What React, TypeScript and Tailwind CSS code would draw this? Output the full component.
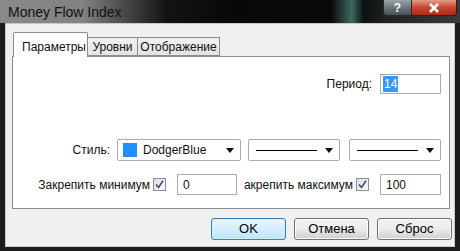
import React from "react";

const font = { fontFamily: '"Liberation Sans", Arial, sans-serif' };

function Checkbox() {
  return (
    <div className="w-[13px] h-[13px] border border-[#8e8f8f] bg-gradient-to-br from-[#dcdcdc] to-[#fbfbfb] flex items-center justify-center">
      <svg width="9" height="9" viewBox="0 0 9 9">
        <path d="M1 4.5 L3.5 7.5 L8 0.8" stroke="#3d4f8a" strokeWidth="1.6" fill="none" />
      </svg>
    </div>
  );
}

function Arrow() {
  return (
    <svg width="8" height="5" viewBox="0 0 8 5" className="shrink-0">
      <path d="M0 0 H8 L4 5 Z" fill="#111" />
    </svg>
  );
}

function Btn({ label, def }: { label: string; def?: boolean }) {
  return (
    <div
      className={
        "w-[75px] h-[22px] rounded-[3px] flex items-center justify-center text-[13px] text-black " +
        (def
          ? "border border-[#3c7fb1] bg-gradient-to-b from-[#eaf6fd] to-[#bee6fd] shadow-[inset_0_0_0_1px_#cdeefb]"
          : "border border-[#707070] bg-gradient-to-b from-[#f2f2f2] via-[#ebebeb] to-[#cfcfcf] shadow-[inset_0_0_0_1px_#fcfcfc]")
      }
    >
      {label}
    </div>
  );
}

export default function App() {
  return (
    <div
      className="w-[460px] h-[251px] bg-[#1c1c1c] flex flex-col overflow-hidden"
      style={font}
    >
      {/* title bar */}
      <div className="h-[23px] shrink-0 flex items-start bg-[linear-gradient(90deg,#8a8a8a_0%,#828282_18%,#4a4a4a_27%,#141414_36%,#080808_50%,#0a0a0a_72%,#3d6a62_76.5%,#0c1210_79%,#202020_84%,#3a3a3a_100%)]">
        <div className="pl-[8px] pt-[4px] text-[14px] leading-[16px] text-[#111]">
          Money Flow Index
        </div>
        <div className="ml-auto mr-[3px] flex h-[16px]">
          <div className="w-[29px] h-full border border-[#2a2a2a] border-t-0 rounded-bl-[4px] bg-gradient-to-b from-[#9aa3aa] via-[#6e767c] to-[#4a5156] flex items-center justify-center text-white text-[12px] font-bold leading-none">
            ?
          </div>
          <div className="w-[45px] h-full border border-[#3a1a16] border-t-0 border-l-0 rounded-br-[4px] bg-gradient-to-b from-[#e29a88] via-[#c9452e] to-[#b02a18] flex items-center justify-center">
            <svg width="12" height="10" viewBox="0 0 12 10">
              <path d="M2 1 L10 9 M10 1 L2 9" stroke="#fff" strokeWidth="2.6" />
            </svg>
          </div>
        </div>
      </div>

      {/* client area */}
      <div className="mx-[5px] h-[224px] shrink-0 bg-[#f0f0f0] border border-[#c8c8c8] flex flex-col text-[12px] text-[#111]">
        {/* tabs */}
        <div className="ml-[7px] mt-[8px] flex items-end h-[24px] shrink-0">
          <div className="w-[75px] h-[25px] border border-[#898c95] border-b-0 bg-white rounded-t-[2px] pt-[5px] pl-[8px] -mb-px relative z-10">
            Параметры
          </div>
          <div className="w-[50px] h-[19px] border border-[#898c95] border-l-0 bg-gradient-to-b from-[#f2f2f2] to-[#e3e3e3] flex items-center justify-center">
            Уровни
          </div>
          <div className="w-[82px] h-[19px] border border-[#898c95] border-l-0 bg-gradient-to-b from-[#f2f2f2] to-[#e3e3e3] flex items-center justify-center">
            Отображение
          </div>
        </div>

        {/* panel */}
        <div className="ml-[6px] mr-[4px] h-[153px] shrink-0 border border-[#898c95] bg-white flex flex-col pr-[8px]">
          {/* period row */}
          <div className="mt-[17px] flex items-center justify-end gap-[8px]">
            <span>Период:</span>
            <div className="w-[61px] h-[20px] border border-[#abadb3] border-t-[#a0a2a8] flex items-center pl-[2px]">
              <span className="bg-[#3399ff] text-white px-[1px] leading-[16px]">14</span>
            </div>
          </div>

          {/* style row */}
          <div className="mt-[45px] flex items-center justify-end">
            <span className="mr-[7px]">Стиль:</span>
            <div className="w-[124px] h-[22px] border border-[#acacac] rounded-[2px] bg-white flex items-center pl-[5px] pr-[6px]">
              <div className="w-[14px] h-[14px] bg-[#1e90ff]" />
              <span className="ml-[6px] flex-1">DodgerBlue</span>
              <Arrow />
            </div>
            <div className="ml-[7px] w-[92px] h-[22px] border border-[#acacac] rounded-[2px] bg-white flex items-center pl-[7px] pr-[6px]">
              <div className="w-[61px] h-px bg-black" />
              <div className="flex-1" />
              <Arrow />
            </div>
            <div className="ml-[9px] w-[92px] h-[22px] border border-[#acacac] rounded-[2px] bg-white flex items-center pl-[7px] pr-[6px]">
              <div className="w-[61px] h-px bg-black" />
              <div className="flex-1" />
              <Arrow />
            </div>
          </div>

          {/* fix row */}
          <div className="mt-[13px] flex items-center justify-end">
            <span>Закрепить минимум</span>
            <div className="ml-[3px]">
              <Checkbox />
            </div>
            <div className="ml-[11px] w-[60px] h-[21px] border border-[#abadb3] flex items-center pl-[5px]">0</div>
            <span className="ml-[7px]">акрепить максимум</span>
            <div className="ml-[3px]">
              <Checkbox />
            </div>
            <div className="ml-[11px] w-[61px] h-[21px] border border-[#abadb3] flex items-center pl-[5px]">100</div>
          </div>
        </div>

        {/* buttons */}
        <div className="mt-[9px] flex justify-end pr-[2px] gap-[8px]">
          <Btn label="OK" def />
          <Btn label="Отмена" />
          <Btn label="Сброс" />
        </div>
      </div>
    </div>
  );
}
